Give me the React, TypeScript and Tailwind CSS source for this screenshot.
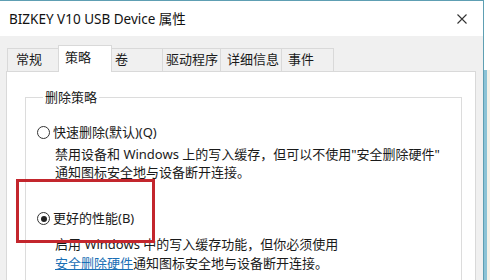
import React from "react";

const font = { fontFamily: '"Noto Sans", "Noto Sans CJK SC", sans-serif' };

const tabs = [
  { label: "常规", w: "w-[52px]", pl: "pl-[8px]" },
  { label: "策略", w: "w-[54px]", pl: "pl-[6px]", active: true },
  { label: "卷", w: "w-[52px]", pl: "pl-[3px]" },
  { label: "驱动程序", w: "w-[59px]", pl: "pl-[3px]" },
  { label: "详细信息", w: "w-[62px]", pl: "pl-[6px]" },
  { label: "事件", w: "w-[53px]", pl: "pl-[6px]" },
];

function Radio({ checked }: { checked?: boolean }) {
  return (
    <span className="w-[13px] h-[13px] rounded-full border border-[#333] bg-white flex items-center justify-center shrink-0">
      {checked && <span className="w-[6px] h-[6px] rounded-full bg-[#222]" />}
    </span>
  );
}

export default function App() {
  return (
    <div
      className="relative w-[490px] h-[280px] overflow-hidden flex bg-white text-[#1a1a1a]"
      style={font}
    >
      {/* Window */}
      <div className="w-[484px] h-full flex flex-col border-t border-r border-[#5e9fb3] bg-[#f0f0f0]">
        {/* Title bar */}
        <div className="h-[35px] bg-white flex items-center justify-between pl-[9px] pr-[16px] shrink-0">
          <span className="text-[13.5px] leading-[18px] text-[#111]">
            BIZKEY V10 USB Device 属性
          </span>
          <svg width="10" height="10" viewBox="0 0 10 10" aria-hidden="true">
            <path d="M0.5 0.5 L9.5 9.5 M9.5 0.5 L0.5 9.5" stroke="#333" strokeWidth="1.1" />
          </svg>
        </div>

        <div className="flex-1 flex flex-col pt-[9px] pl-[6px] pr-[7px]">
          {/* Tabs */}
          <div className="flex items-end pl-px">
            {tabs.map((t, i) =>
              t.active ? (
                <div
                  key={t.label}
                  className={`relative z-10 -ml-px -mb-px h-[27px] ${t.w} ${t.pl} pt-[3px] bg-white border-l border-t border-r border-[#d9d9d9] text-[13px] leading-[17px] whitespace-nowrap`}
                >
                  {t.label}
                </div>
              ) : (
                <div
                  key={t.label}
                  className={`h-[23px] ${i > 0 ? "-ml-px" : ""} ${t.w} ${t.pl} pt-[2px] bg-[#f0f0f0] border-l border-t border-r border-[#d9d9d9] text-[13px] leading-[17px] whitespace-nowrap`}
                >
                  {t.label}
                </div>
              )
            )}
          </div>

          {/* Panel */}
          <div className="flex-1 bg-white border border-[#d9d9d9] pt-[17px] pl-[18px] pr-[13px]">
            <fieldset className="border border-[#dcdcdc] h-[220px] pl-[11px]">
              <legend className="ml-[6px] px-[2px] text-[13px] leading-[17px]">删除策略</legend>

              <div className="mt-[18px] flex items-center gap-[3px] h-[17px]">
                <Radio />
                <span className="text-[13px] leading-[17px]">快速删除(默认)(Q)</span>
              </div>
              <div className="mt-[4px] pl-[18px] text-[13px] leading-[18px]">
                <div>禁用设备和 Windows 上的写入缓存，但可以不使用"安全删除硬件"</div>
                <div>通知图标安全地与设备断开连接。</div>
              </div>

              <div className="mt-[29px] flex items-center gap-[3px] h-[17px]">
                <Radio checked />
                <span className="text-[13px] leading-[17px]">更好的性能(B)</span>
              </div>
              <div className="mt-[8px] pl-[18px] text-[13px] leading-[19px]">
                <div>启用 Windows 中的写入缓存功能，但你必须使用</div>
                <div>
                  <span className="text-[#1a6fb5] underline">安全删除硬件</span>
                  通知图标安全地与设备断开连接。
                </div>
              </div>
            </fieldset>
          </div>
        </div>
      </div>

      {/* Edge of the window behind */}
      <div className="flex-1 flex flex-col">
        <div className="h-[70px] bg-white" />
        <div className="flex-1 bg-[#f3f1e8] border-l-[3px] border-[#8cc3d6]" />
      </div>

      {/* Red highlight annotation */}
      <div className="absolute left-[16px] top-[179px] w-[139px] h-[64px] border-[3px] border-[#c3262d]" />
    </div>
  );
}
